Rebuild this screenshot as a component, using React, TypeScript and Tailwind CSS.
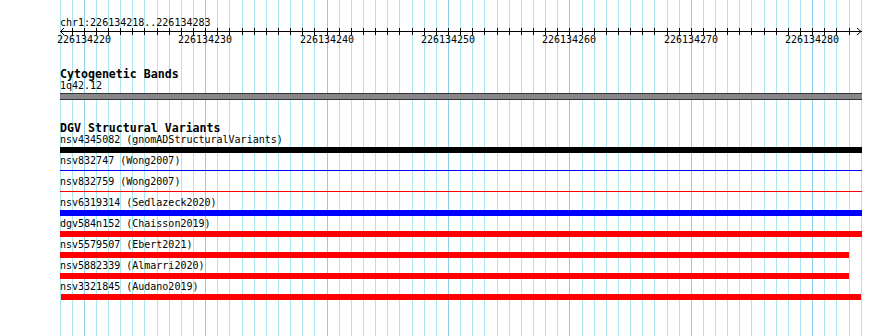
import React from "react";

const PX = 12.14;
const START = 218;
const N = 66;
const xAt = (k: number) => Math.floor(60 + k * PX);

const rows: { label: string; color: string; thin?: boolean; x0: number; x1: number }[] = [
  { label: "nsv4345082 (gnomADStructuralVariants)", color: "bg-black", x0: 60, x1: 862 },
  { label: "nsv832747 (Wong2007)", color: "bg-[#0000ff]", thin: true, x0: 60, x1: 862 },
  { label: "nsv832759 (Wong2007)", color: "bg-[#ff0000]", thin: true, x0: 60, x1: 862 },
  { label: "nsv6319314 (Sedlazeck2020)", color: "bg-[#0000ff]", x0: 60, x1: 862 },
  { label: "dgv584n152 (Chaisson2019)", color: "bg-[#ff0000]", x0: 60, x1: 862 },
  { label: "nsv5579507 (Ebert2021)", color: "bg-[#ff0000]", x0: 60, x1: 849 },
  { label: "nsv5882339 (Almarri2020)", color: "bg-[#ff0000]", x0: 60, x1: 849 },
  { label: "nsv3321845 (Audano2019)", color: "bg-[#ff0000]", x0: 61, x1: 861 },
];

function Grid() {
  const lines = [];
  for (let k = 0; k <= N; k++) {
    const major = (START + k) % 10 === 0;
    const x = xAt(k) + 0.5;
    lines.push(
      <line
        key={k}
        x1={x}
        x2={x}
        y1={0}
        y2={336}
        stroke={major ? "#8ccdec" : "#aae6ef"}
        strokeWidth={1}
      />
    );
  }
  return (
    <svg
      className="absolute inset-0"
      width={890}
      height={336}
      shapeRendering="crispEdges"
    >
      {lines}
    </svg>
  );
}

function Ruler() {
  const ticks = [];
  for (let k = 1; k < N; k++) {
    const x = xAt(k) - 60 + 0.5;
    ticks.push(<line key={k} x1={x} x2={x} y1={1} y2={8} stroke="#000" />);
  }
  const labels = [];
  for (let k = 0; k <= N; k++) {
    if ((START + k) % 10 === 0) {
      labels.push(
        <div
          key={k}
          className="absolute top-[34px] w-[60px] text-center leading-[12px] text-[10px]"
          style={{ left: xAt(k) - 60 - 30 }}
        >
          {START + k + 226134000}
        </div>
      );
    }
  }
  return (
    <div className="relative h-[48px]">
      <div className="pt-[17px] text-[10px] leading-[12px]">chr1:226134218..226134283</div>
      <svg
        className="absolute left-0 top-[27px] overflow-visible"
        width={803}
        height={9}
        shapeRendering="crispEdges"
      >
        <line x1={0} x2={802} y1={4.5} y2={4.5} stroke="#000" />
        {ticks}
        <polyline points="4,1 0.5,4.5 4,8" fill="none" stroke="#000" shapeRendering="auto" />
        <polyline points="797,1 801,4.5 797,8" fill="none" stroke="#000" shapeRendering="auto" />
      </svg>
      {labels}
    </div>
  );
}

export default function App() {
  return (
    <div
      className="relative h-[336px] w-[890px] overflow-hidden bg-white text-black"
      style={{ fontFamily: '"DejaVu Sans Mono", "Liberation Mono", monospace' }}
    >
      <Grid />
      <div className="relative w-[862px] pl-[60px]">
        <Ruler />

        <div className="mt-[20px] text-[11.6px] font-bold leading-[12px]">Cytogenetic Bands</div>
        <div className="text-[10px] leading-[12px]">1q42.12</div>
        <div className="mt-[1px] h-[7px] w-[802px] border-y border-[#333333] bg-[#888888]" />

        <div className="mt-[22px] text-[11.6px] font-bold leading-[12px]">DGV Structural Variants</div>
        <div className="flex flex-col">
          {rows.map((r, i) => (
            <div key={i} className="flex h-[21px] flex-col">
              <div className="text-[10px] leading-[12px]">{r.label}</div>
              <div className="mt-[1px] h-[6px]">
                <div
                  className={`${r.color} ${r.thin ? "mt-[2px] h-[1px]" : "h-[6px]"}`}
                  style={{ marginLeft: r.x0 - 60, width: r.x1 - r.x0 }}
                />
              </div>
            </div>
          ))}
        </div>
      </div>
    </div>
  );
}
